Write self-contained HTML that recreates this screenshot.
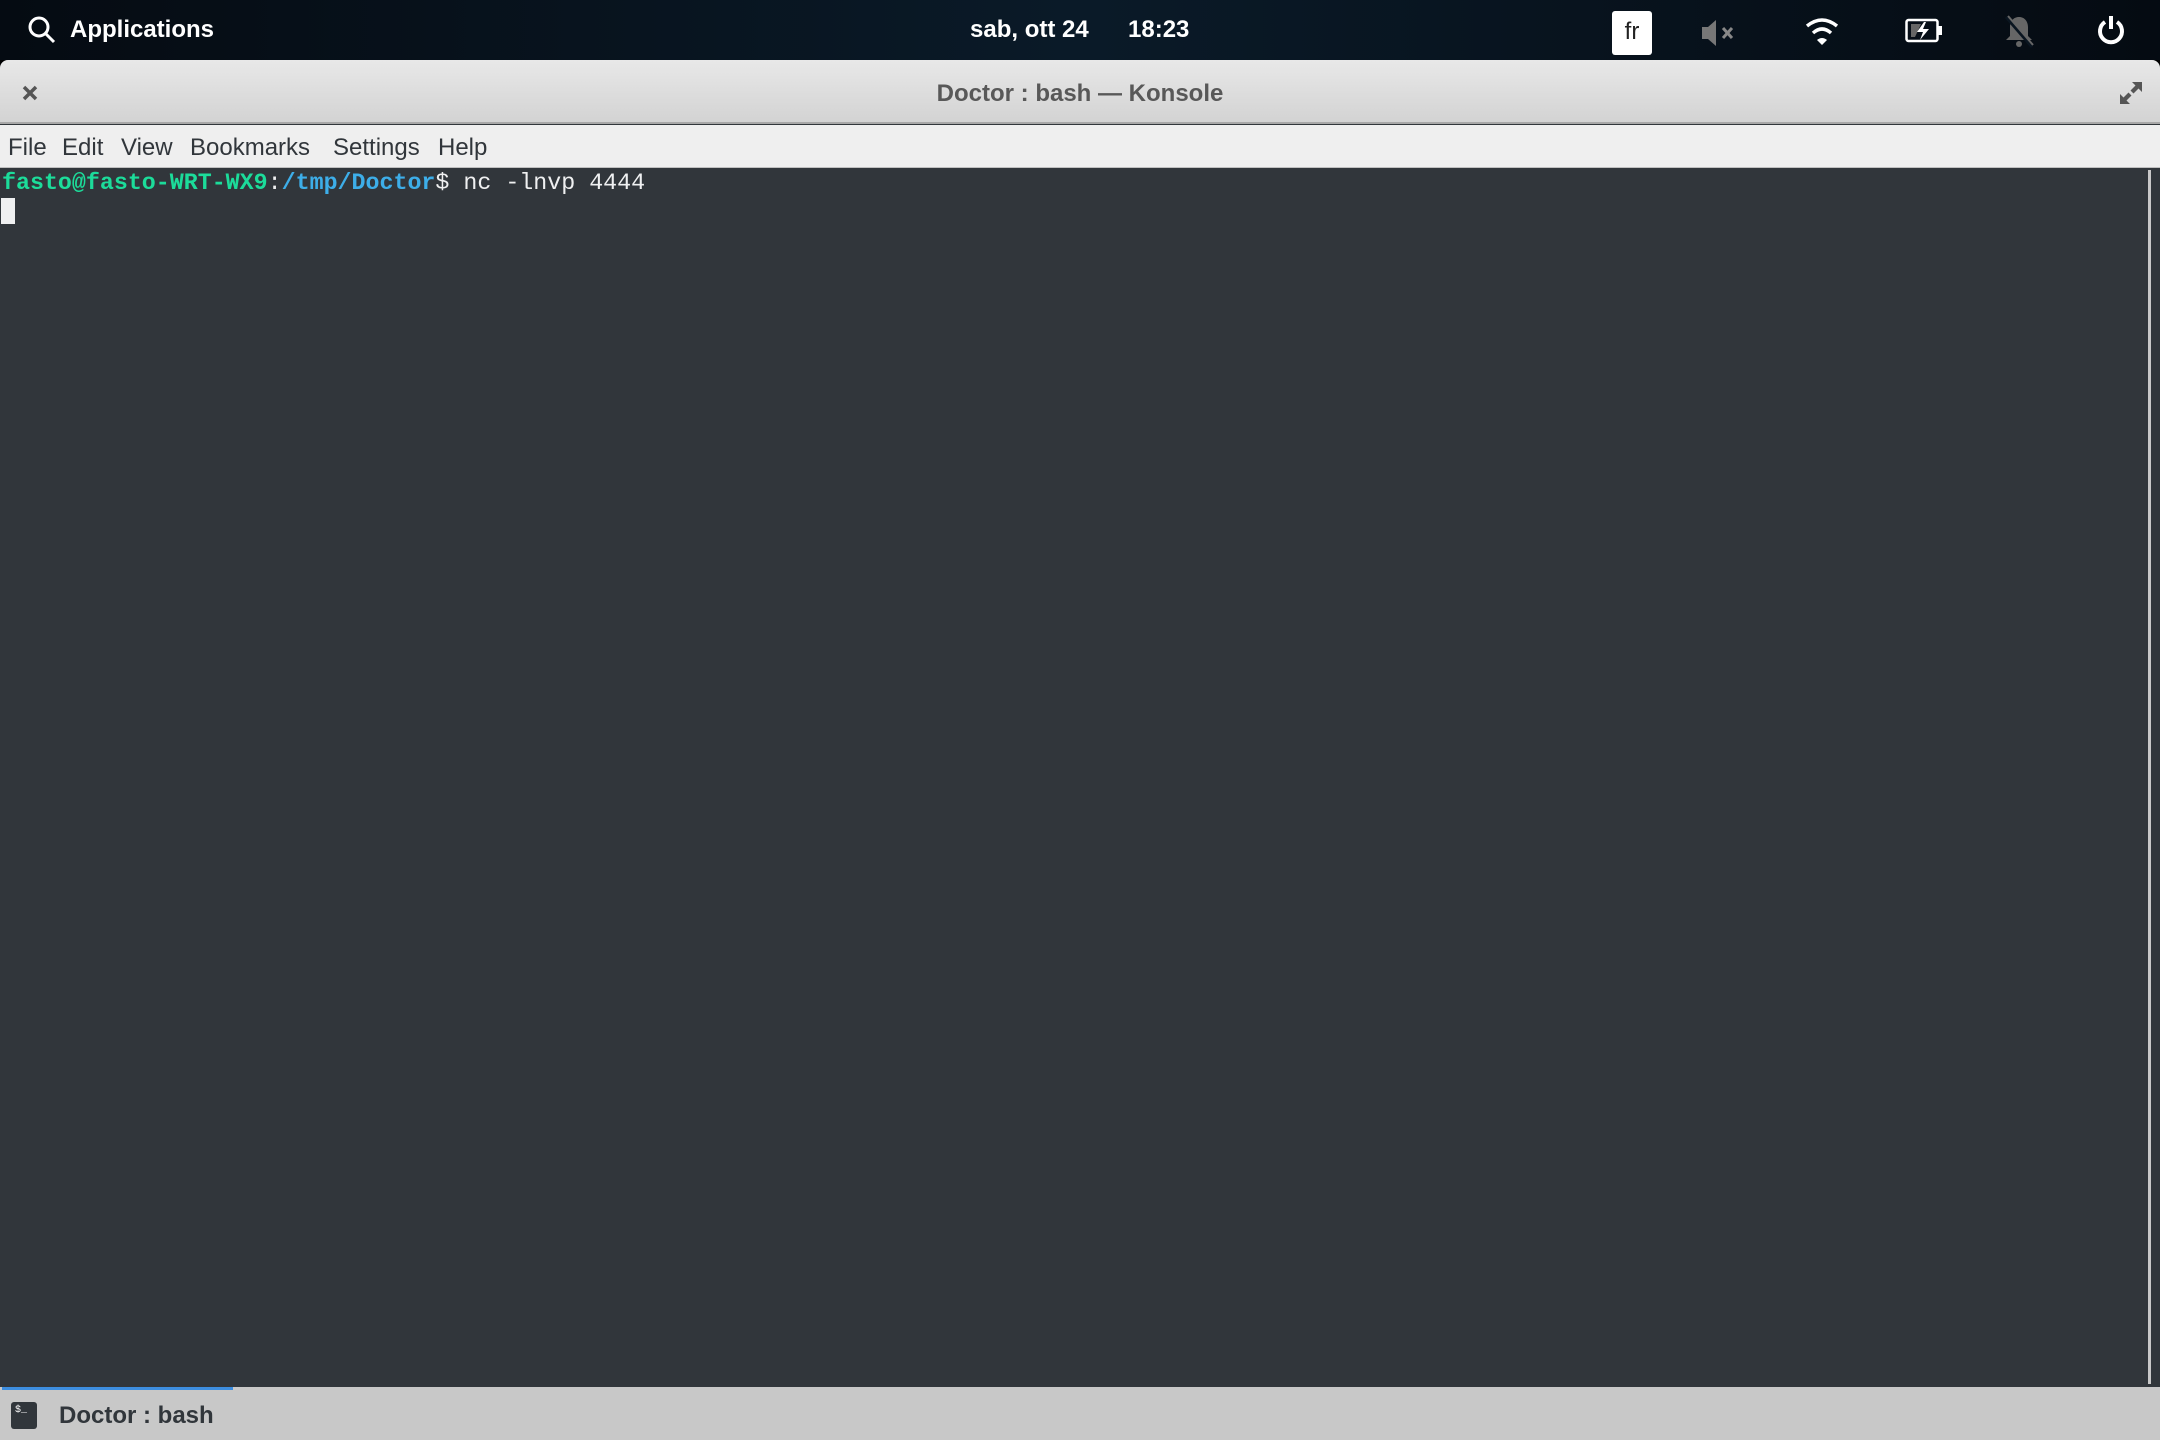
<!DOCTYPE html>
<html><head><meta charset="utf-8"><style>
*{margin:0;padding:0;box-sizing:border-box}
body{width:2160px;height:1440px;overflow:hidden;background:#000;font-family:"Liberation Sans","DejaVu Sans",sans-serif;position:relative}
.top{position:absolute;left:0;top:0;width:2160px;height:60px;background:linear-gradient(90deg,#050b12,#0a1a28 50%,#050b12)}
.top .t{position:absolute;color:#fff;font-weight:bold;font-size:24px;top:16px}
.win{position:absolute;left:0;top:60px;width:2160px;height:1380px;background:#31363b;border-radius:8px 8px 0 0;overflow:hidden}
.title{position:absolute;left:0;top:0;width:2160px;height:64px;background:linear-gradient(#e8e8e8,#d3d3d3);border-bottom:2px solid #a8a8a8}
.title .c{position:absolute;width:100%;text-align:center;top:20px;font-size:24px;font-weight:bold;color:#585858}
.menu{position:absolute;left:0;top:65px;width:2160px;height:43px;background:#efefef;border-bottom:1px solid #c0c0c0}
.menu span{position:absolute;top:9px;font-size:24px;color:#31363b}
.term{position:absolute;left:0;top:108px;width:2160px;height:1218px;background:#31363b;font-family:"Liberation Mono",monospace;font-size:23.3px;color:#eff0f1}
.tabs{position:absolute;left:0;top:1327px;width:2160px;height:53px;background:#c8c8c8}
</style></head><body>
<div class="top">
<svg style="position:absolute;left:27px;top:15px" width="30" height="30" viewBox="0 0 30 30"><circle cx="12" cy="12" r="9" fill="none" stroke="#fff" stroke-width="3"/><line x1="18.5" y1="18.5" x2="27" y2="27" stroke="#fff" stroke-width="3"/></svg>
<div class="t" style="left:70px">Applications</div>
<div class="t" style="left:970px">sab, ott 24</div>
<div class="t" style="left:1128px">18:23</div>
<div style="position:absolute;left:1612px;top:11px;width:40px;height:44px;background:#fff;border-radius:3px;color:#222;font-size:24px;text-align:center;line-height:42px">fr</div>
<svg style="position:absolute;left:1702px;top:18px" width="36" height="30" viewBox="0 0 36 30"><path d="M0 9h6l8-7v26l-8-7H0z" fill="#777"/><path d="M21 10l9 10M30 10l-9 10" stroke="#888" stroke-width="3"/></svg>
<svg style="position:absolute;left:1805px;top:18px" width="34" height="28" viewBox="0 0 34 28"><path d="M2 8Q17-4 32 8" fill="none" stroke="#fff" stroke-width="3.5"/><path d="M8 15Q17 7 26 15" fill="none" stroke="#fff" stroke-width="3.5"/><path d="M12 22L17 27L22 22Q17 18 12 22z" fill="#fff"/></svg>
<svg style="position:absolute;left:1905px;top:18px" width="38" height="26" viewBox="0 0 38 26"><rect x="1.5" y="2" width="31" height="21" rx="2" fill="none" stroke="#fff" stroke-width="2.5"/><rect x="33" y="8" width="4" height="9" fill="#fff"/><path d="M6 6h10l-6 13H6z" fill="#666"/><path d="M19 4l-7 10h6l-3 8 9-11h-6l3-7z" fill="#fff"/></svg>
<svg style="position:absolute;left:2003px;top:15px" width="32" height="34" viewBox="0 0 32 34"><path d="M16 2c-6 0-9 5-9 10v9l-4 4h26l-4-4v-9c0-5-3-10-9-10z" fill="#666"/><circle cx="16" cy="29" r="3" fill="#666"/><line x1="3" y1="2" x2="29" y2="32" stroke="#0a1520" stroke-width="3"/><line x1="5" y1="1" x2="30" y2="30" stroke="#666" stroke-width="2"/></svg>
<svg style="position:absolute;left:2096px;top:14px" width="30" height="32" viewBox="0 0 30 32"><path d="M9 8A11 11 0 1 0 21 8" fill="none" stroke="#fff" stroke-width="4"/><line x1="15" y1="2" x2="15" y2="15" stroke="#fff" stroke-width="4"/></svg>
</div>
<div class="win">
<div class="title">
<svg style="position:absolute;left:22px;top:25px" width="16" height="16" viewBox="0 0 16 16"><path d="M2 2l12 12M14 2L2 14" stroke="#555" stroke-width="3.5"/></svg>
<div class="c">Doctor : bash — Konsole</div>
<svg style="position:absolute;left:2118px;top:20px" width="26" height="26" viewBox="0 0 26 26"><path d="M14 2h10v10l-3.5-3.5-5 5-3-3 5-5zM12 24H2V14l3.5 3.5 5-5 3 3-5 5z" fill="#555"/></svg>
</div>
<div class="menu">
<span style="left:8px">File</span><span style="left:62px">Edit</span><span style="left:121px">View</span><span style="left:190px">Bookmarks</span><span style="left:333px">Settings</span><span style="left:438px">Help</span>
</div>
<div class="term">
<div style="position:absolute;left:2px;top:2px;white-space:pre"><b style="color:#1cdc9a">fasto@fasto-WRT-WX9</b>:<b style="color:#3daee9">/tmp/Doctor</b>$ nc -lnvp 4444</div>
<div style="position:absolute;left:1px;top:30px;width:14px;height:26px;background:#eff0f1"></div>
<div style="position:absolute;left:2148px;top:2px;width:3px;height:1214px;background:#c8c8c8"></div>
</div>
<div class="tabs">
<div style="position:absolute;left:2px;top:0;width:231px;height:3px;background:#3d8ee0"></div>
<div style="position:absolute;left:11px;top:15px;width:26px;height:27px;background:#31363b;border-radius:3px;color:#fff;font-size:10px;padding:3px 0 0 4px;font-family:'Liberation Mono',monospace">$_</div>
<div style="position:absolute;left:59px;top:15px;font-size:24px;font-weight:bold;color:#31363b">Doctor : bash</div>
</div>
</div>
</body></html>
